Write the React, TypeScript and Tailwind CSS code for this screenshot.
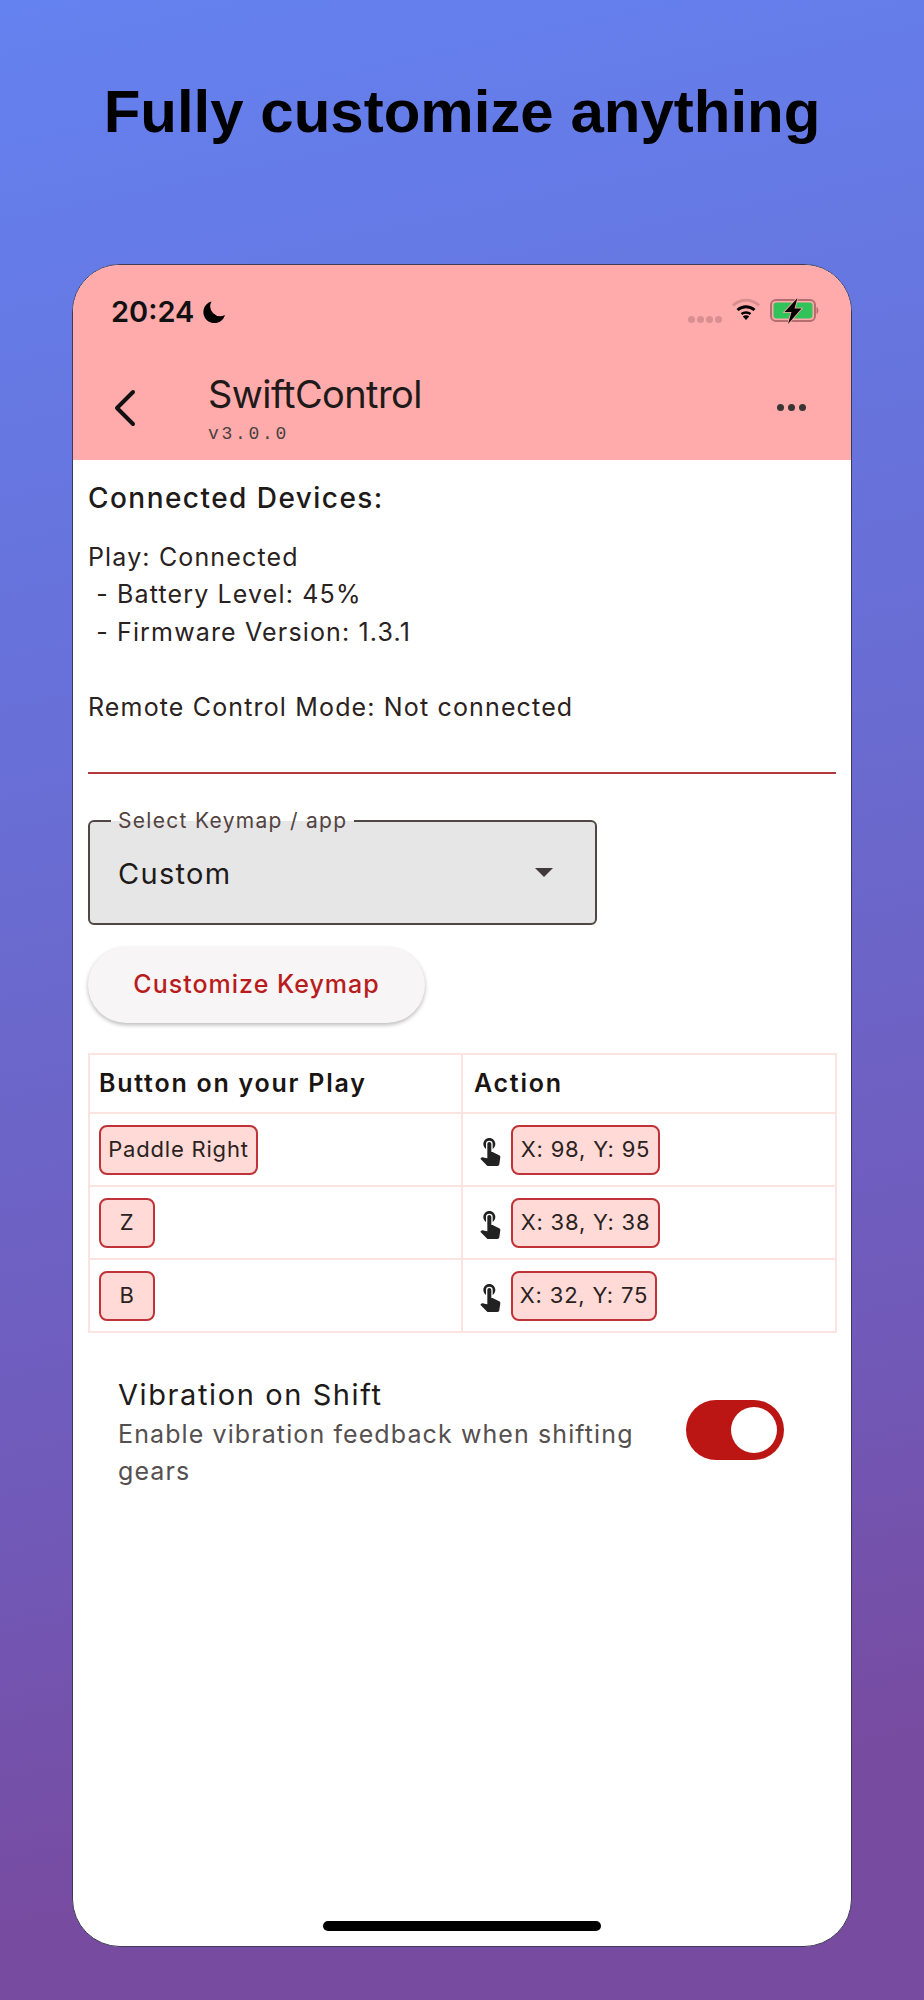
import React from 'react';
import { MdTouchApp } from 'react-icons/md';

const Chip = ({ label, className }: { label: string; className?: string }) => (
  <span
    className={`flex h-[50px] items-center justify-center rounded-[8px] border-2 border-[#bf3338] bg-[#ffdad6] text-[22px] tracking-[0.8px] text-[#2a2221] ${className ?? ''}`}
  >
    {label}
  </span>
);

const rows = [
  { button: 'Paddle Right', buttonWidth: 'w-[159px]', action: 'X: 98, Y: 95', actionWidth: 'w-[149px]' },
  { button: 'Z', buttonWidth: 'w-[56px]', action: 'X: 38, Y: 38', actionWidth: 'w-[149px]' },
  { button: 'B', buttonWidth: 'w-[56px]', action: 'X: 32, Y: 75', actionWidth: 'w-[146px]' },
];

const StatusBar = () => (
  <div className="flex h-[70px] items-start justify-between pt-[29px] pr-[31px] pl-[38px]">
    <div className="flex items-center gap-[8px]">
      <span className="text-[29px] leading-[36px] font-semibold text-[#111]">20:24</span>
      <svg width="24" height="24" viewBox="0 0 24 24" className="mt-[-1px]">
        <path d="M9.5 1.5 A11 11 0 1 0 23 15 A10 10 0 0 1 9.5 1.5 Z" fill="#000" />
      </svg>
    </div>
    <div className="mt-[4px] flex items-center gap-[9px]">
      <div className="mt-[16px] flex gap-[2px]">
        <span className="h-[7px] w-[7px] rounded-full bg-[#d98f92]" />
        <span className="h-[7px] w-[7px] rounded-full bg-[#d98f92]" />
        <span className="h-[7px] w-[7px] rounded-full bg-[#d98f92]" />
        <span className="h-[7px] w-[7px] rounded-full bg-[#d98f92]" />
      </div>
      <svg width="30" height="24" viewBox="0 0 30 24" fill="none" className="mt-[-2px]">
        <path d="M2 7.5 C9 0.5 21 0.5 28 7.5" stroke="#d98f92" strokeWidth="3" />
        <path d="M6.5 12 C11.5 7.5 18.5 7.5 23.5 12" stroke="#000" strokeWidth="3" />
        <path d="M10.5 16 C13 14 17 14 19.5 16" stroke="#000" strokeWidth="2.6" />
        <path d="M11.8 18.4 L15 22 L18.2 18.4 C16.5 17 13.5 17 11.8 18.4 Z" fill="#000" />
      </svg>
      <svg width="50" height="26" viewBox="0 0 50 26" fill="none">
        <rect x="1" y="2" width="44" height="21" rx="5" stroke="#b56d70" strokeWidth="2" />
        <rect x="3.5" y="4.5" width="39" height="16" rx="3" fill="#32c25a" />
        <path d="M46.5 9 C49 10 49 15 46.5 16 Z" fill="#b56d70" />
        <path
          d="M27.5 0 L14.5 14 L21.5 14 L18 26 L31.5 10.5 L24.5 10.5 Z"
          fill="#000"
          stroke="#ffabab"
          strokeWidth="1.6"
          paintOrder="stroke"
        />
      </svg>
    </div>
  </div>
);

const AppBar = () => (
  <div className="flex h-[125px] items-start justify-between pr-[45px] pl-[40px]">
    <div className="flex items-start">
      <svg width="24" height="38" viewBox="0 0 24 38" fill="none" className="mt-[54px]">
        <path d="M20 3 L4 19 L20 35" stroke="#111" strokeWidth="4" strokeLinecap="round" strokeLinejoin="round" />
      </svg>
      <div className="ml-[71px] flex flex-col pt-[37px]">
        <span className="text-[38px] leading-[44px] tracking-[-0.6px] text-[#1f1a1a]">SwiftControl</span>
        <span className="mt-[8px] font-['Liberation_Mono',monospace] text-[18px] leading-[20px] tracking-[2.7px] text-[#4a3f3f]">
          v3.0.0
        </span>
      </div>
    </div>
    <div className="mt-[69px] flex gap-[4px]">
      <span className="h-[7px] w-[7px] rounded-full bg-[#3a3535]" />
      <span className="h-[7px] w-[7px] rounded-full bg-[#3a3535]" />
      <span className="h-[7px] w-[7px] rounded-full bg-[#3a3535]" />
    </div>
  </div>
);

const DeviceInfo = () => (
  <div className="border-b-2 border-[#b3393c] pb-[46px]">
    <h2 className="pt-[20px] text-[28px] leading-[36px] font-medium tracking-[1.45px] text-[#201a19]">
      Connected Devices:
    </h2>
    <div className="mt-[23px] text-[25px] leading-[37.4px] tracking-[1.15px] whitespace-pre text-[#2a2221]">
      <p>Play: Connected</p>
      <p> - Battery Level: 45%</p>
      <p> - Firmware Version: 1.3.1</p>
      <p>&nbsp;</p>
      <p>Remote Control Mode: Not connected</p>
    </div>
  </div>
);

const KeymapSelect = () => (
  <div className="relative mt-[46px] flex h-[105px] w-[509px] items-center justify-between rounded-[6px] border-2 border-[#4f4745] bg-[#e6e6e6] pr-[42px] pl-[28px]">
    <span className="absolute top-[-14px] left-[21px] bg-[linear-gradient(to_bottom,#ffffff_50%,#e6e6e6_50%)] px-[7px] text-[21px] leading-[26px] tracking-[1.3px] text-[#534341]">
      Select Keymap / app
    </span>
    <span className="pt-[2px] text-[29px] tracking-[1.3px] text-[#201a19]">Custom</span>
    <span className="h-0 w-0 border-x-[9px] border-t-[9px] border-x-transparent border-t-[#3f3a39]" />
  </div>
);

const KeymapTable = () => (
  <table className="mt-[30px] w-[749px] table-fixed border-collapse">
    <thead>
      <tr className="h-[59px] text-left text-[25px] font-semibold tracking-[1.75px] text-[#1a1413]">
        <th className="w-[373px] border-2 border-[#fbe3df] pl-[9px] font-semibold">Button on your Play</th>
        <th className="border-2 border-[#fbe3df] pl-[11px] font-semibold">Action</th>
      </tr>
    </thead>
    <tbody>
      {rows.map((row) => (
        <tr key={row.button} className="h-[73px]">
          <td className="border-2 border-[#fbe3df] pl-[9px]">
            <Chip label={row.button} className={row.buttonWidth} />
          </td>
          <td className="border-2 border-[#fbe3df] pl-[11px]">
            <div className="flex items-center gap-[5px]">
              <MdTouchApp className="h-[32px] w-[32px] text-[#222]" />
              <Chip label={row.action} className={row.actionWidth} />
            </div>
          </td>
        </tr>
      ))}
    </tbody>
  </table>
);

const VibrationSetting = () => (
  <div className="mt-[43px] flex items-start justify-between pr-[52px] pl-[30px]">
    <div className="flex w-[530px] flex-col">
      <span className="text-[29px] leading-[38px] tracking-[1.6px] text-[#201a19]">Vibration on Shift</span>
      <span className="mt-[2px] text-[25px] leading-[37px] tracking-[1.1px] text-[#555050]">
        Enable vibration feedback when shifting gears
      </span>
    </div>
    <div className="mt-[24px] flex h-[60px] w-[98px] items-center justify-end rounded-full bg-[#bb1614] pr-[7px]">
      <span className="h-[46px] w-[46px] rounded-full bg-white" />
    </div>
  </div>
);

export default function App() {
  return (
    <div className="flex h-[2000px] w-[924px] flex-col items-center bg-[linear-gradient(168deg,#6482f0_0%,#686fd6_35%,#7159b8_70%,#774ba0_88%,#774ba0_100%)] font-['Inter',sans-serif]">
      <h1 className="flex h-[224px] items-center font-['Liberation_Sans',sans-serif] text-[60px] leading-none font-bold text-black">
        Fully customize anything
      </h1>
      <div className="mt-[40px] flex h-[1683px] w-[780px] flex-col overflow-hidden rounded-[48px] border border-[#3f3a55] bg-white">
        <div className="bg-[#ffabab]">
          <StatusBar />
          <AppBar />
        </div>
        <div className="flex flex-1 flex-col px-[15px]">
          <DeviceInfo />
          <KeymapSelect />
          <button
            type="button"
            className="mt-[22px] h-[76px] w-[337px] rounded-full bg-[#f7f5f5] text-[25px] font-medium tracking-[1px] text-[#b91c1c] shadow-[0_2px_4px_rgba(0,0,0,0.28)]"
          >
            Customize Keymap
          </button>
          <KeymapTable />
          <VibrationSetting />
          <div className="flex flex-1 items-end justify-center pb-[15px]">
            <span className="h-[10px] w-[278px] rounded-full bg-black" />
          </div>
        </div>
      </div>
    </div>
  );
}
